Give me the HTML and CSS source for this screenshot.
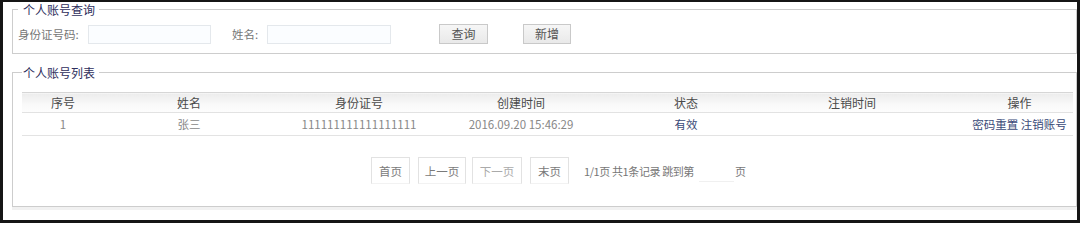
FILE: index.html
```html
<!DOCTYPE html>
<html lang="zh-CN">
<head>
<meta charset="utf-8">
<title>个人账号</title>
<link rel="stylesheet" href="styles.css">
</head>
<body>
<div class="frame">
  <fieldset class="box box-query">
    <legend class="legend legend-query">个人账号查询</legend>
    <div class="query-row">
      <label class="lbl lbl-id">身份证号码:</label>
      <input class="txt txt-id" type="text">
      <label class="lbl lbl-name">姓名:</label>
      <input class="txt txt-name" type="text">
      <button class="btn btn-search" type="button">查询</button>
      <button class="btn btn-add" type="button">新增</button>
    </div>
  </fieldset>

  <fieldset class="box box-list">
    <legend class="legend legend-list">个人账号列表</legend>
    <table class="grid">
      <colgroup>
        <col class="c1"><col class="c2"><col class="c3"><col class="c4"><col class="c5"><col class="c6"><col class="c7">
      </colgroup>
      <thead>
        <tr>
          <th>序号</th><th>姓名</th><th>身份证号</th><th>创建时间</th><th>状态</th><th>注销时间</th><th class="op">操作</th>
        </tr>
      </thead>
      <tbody>
        <tr>
          <td>1</td><td>张三</td><td>111111111111111111</td><td>2016.09.20 15:46:29</td><td class="link">有效</td><td></td><td class="op link">密码重置 注销账号</td>
        </tr>
      </tbody>
    </table>
    <div class="pager">
      <span class="pbtn p-first">首页</span>
      <span class="pbtn p-prev">上一页</span>
      <span class="pbtn p-next">下一页</span>
      <span class="pbtn p-last">末页</span>
      <span class="pinfo">1/1页 共1条记录 跳到第</span>
      <input class="pgo" type="text">
      <span class="punit">页</span>
    </div>
  </fieldset>
</div>
</body>
</html>
```

FILE: styles.css
```css
* { box-sizing: border-box; }
html, body { margin: 0; padding: 0; background: #ffffff; }
body {
  font-family: "Noto Sans CJK SC", "Liberation Sans", sans-serif;
  font-size: 12px;
  color: #666;
}
.frame {
  width: 1080px;
  height: 223px;
  border-style: solid;
  border-color: #151515;
  border-width: 2px 3px 3px 3px;
  background: #fff;
  overflow: hidden;
}
.box {
  margin: 0 0 0 9px;
  border: 1px solid #cdcdcd;
  min-width: 0;
}
.legend {
  font-size: 12px;
  line-height: 15px;
  color: #2e2e5c;
  padding: 0 4px 0 5px;
}
.box-query {
  padding: 7px 0 9px 5px;
}
.box-list {
  margin-top: 11px;
  padding: 12px 3px 22px 9px;
  box-shadow: 0 3px 0 #f1f1f1;
}
.legend-list { padding: 0 4px 0 1px; }

.query-row {
  display: flex;
  align-items: center;
  height: 20px;
}
.lbl { color: #777; line-height: 20px; font-size: 11.5px; }
.lbl-id { width: 70px; }
.lbl-name { width: 35px; margin-left: 21px; }
.txt {
  height: 19px;
  border: 1px solid #e4e8ec;
  background: #fbfdff;
  padding: 0 2px;
  font: inherit;
}
.txt-id { width: 123px; }
.txt-name { width: 124px; }
.btn {
  height: 20px;
  border: 1px solid #c9c9c9;
  background: linear-gradient(#f6f6f6, #e9e9e9);
  color: #555;
  font: inherit;
  font-size: 12px;
  padding: 0;
  line-height: 18px;
}
.btn-search { width: 49px; margin-left: 48px; }
.btn-add { width: 48px; margin-left: 35px; }

.grid {
  width: 1051px;
  border-collapse: collapse;
  table-layout: fixed;
}
.c1 { width: 82px; }
.c2 { width: 170px; }
.c3 { width: 170px; }
.c4 { width: 154px; }
.c5 { width: 176px; }
.c6 { width: 156px; }
.c7 { width: 143px; }
.grid th {
  height: 20px;
  padding: 0;
  font-weight: normal;
  color: #4a4a4a;
  text-align: center;
  background: linear-gradient(#ececec, #f9f9f9 60%, #fdfdfd);
  border-top: 1px solid #d6d6d6;
  border-bottom: 1px solid #e2e2e2;
}
.grid td {
  height: 23px;
  padding: 0;
  text-align: center;
  color: #888;
  font-size: 11.5px;
  border-bottom: 1px solid #e3e3e3;
}
.grid th.op, .grid td.op { padding-left: 36px; }
.grid td.link { color: #3a4a78; }

.pager {
  display: flex;
  align-items: center;
  margin-top: 21px;
  padding-left: 349px;
  height: 27px;
}
.pbtn {
  display: flex;
  align-items: center;
  justify-content: center;
  height: 27px;
  border: 1px solid #e2e2e2;
  border-bottom-color: #f2f2f2;
  color: #7a7a7a;
  font-size: 11.5px;
  margin-right: 8px;
}
.p-first { width: 39px; }
.p-prev { width: 48px; margin-right: 6px; }
.p-next { width: 50px; color: #aaa; }
.p-last { width: 39px; }
.pinfo { margin-left: 7px; color: #777; font-size: 11px; letter-spacing: -0.4px; }
.pgo {
  width: 35px;
  height: 22px;
  border: none;
  border-bottom: 1px solid #f0f0f0;
  background: #fff;
  margin: 0 1px 0 5px;
}
.punit { color: #777; font-size: 11px; }
```
